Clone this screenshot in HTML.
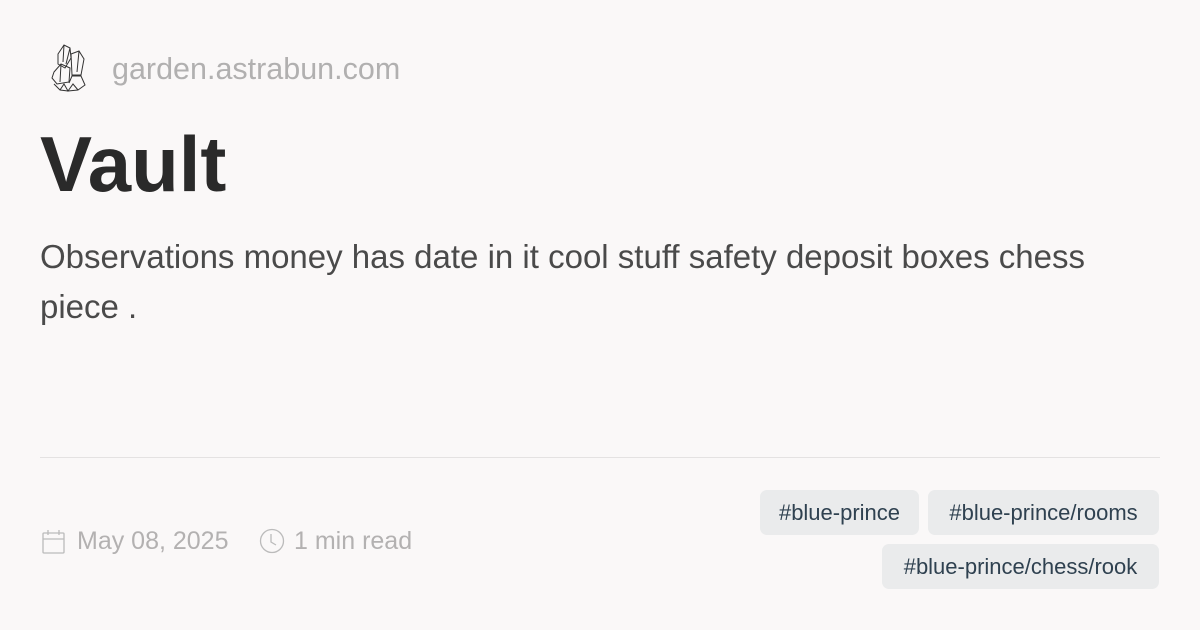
<!DOCTYPE html>
<html><head><style>
body{margin:0;width:1200px;height:630px;background:#faf8f8;font-family:"Liberation Sans",sans-serif;position:relative;overflow:hidden}
.dom{position:absolute;left:112px;top:52px;font-size:30.5px;color:#b1b0b0}
h1{position:absolute;left:40px;top:116px;margin:0;font-size:78px;font-weight:bold;color:#2a2a2a;line-height:96px}
.desc{position:absolute;left:40px;top:232px;width:1090px;font-size:33px;line-height:50px;color:#4a4a4a}
.hr{position:absolute;left:40px;right:40px;top:457px;height:1px;background:#e4e2e2}
.meta{position:absolute;top:526px;font-size:25px;color:#b3b1b1;line-height:30px}
.tag{position:absolute;height:45px;line-height:45px;background:#eaebec;border-radius:7px;font-size:22px;color:#2f4150;text-align:center}
</style></head><body>
<svg style="position:absolute;left:48px;top:42px" width="40" height="52" viewBox="0 0 40 52" fill="none" stroke="#333" stroke-width="1">
<path d="M10 12 L16 3 L22 6 L23 16 L17 26 L10 22 Z M16 3 L15 20 M22 6 L18 22"/>
<path d="M23 12 L31 9 L36 17 L33 33 L24 33 Z M31 9 L29 30"/>
<path d="M6 30 L13 22 L22 26 L21 40 L9 42 L4 36 Z M13 22 L12 40"/>
<path d="M6 42 L12 48 L20 49 L30 48 L37 43 L33 34 L24 34 L21 41 M12 48 L16 42 L20 49 L25 42 L30 48"/>
</svg>
<div class="dom">garden.astrabun.com</div>
<h1>Vault</h1>
<div class="desc">Observations money has date in it cool stuff safety deposit boxes chess piece .</div>
<div class="hr"></div>
<svg style="position:absolute;left:42px;top:529px" width="24" height="26" viewBox="0 0 24 26" fill="none" stroke="#bbb" stroke-width="1.3"><rect x="1" y="4" width="21" height="20" rx="1"/><path d="M1 10 H22 M6 1 V6 M17 1 V6"/></svg>
<div class="meta" style="left:77px">May 08, 2025</div>
<svg style="position:absolute;left:259px;top:528px" width="26" height="26" viewBox="0 0 26 26" fill="none" stroke="#bbb" stroke-width="1.3"><circle cx="13" cy="13" r="11.5"/><path d="M12 6 V14 L17 17"/></svg>
<div class="meta" style="left:294px">1 min read</div>
<div class="tag" style="left:760px;top:490px;width:159px">#blue-prince</div>
<div class="tag" style="left:928px;top:490px;width:231px">#blue-prince/rooms</div>
<div class="tag" style="left:882px;top:544px;width:277px">#blue-prince/chess/rook</div>
</body></html>
